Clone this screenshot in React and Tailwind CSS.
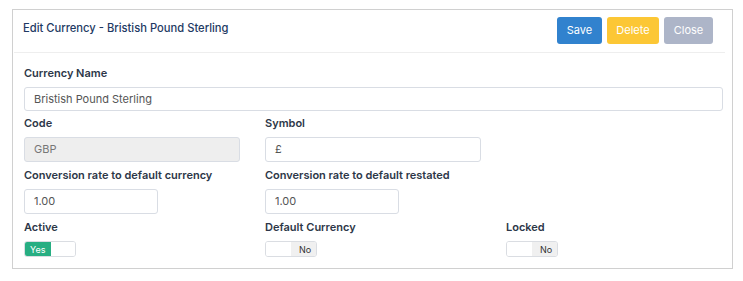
import React from "react";

const font = { fontFamily: "Inter, 'Noto Sans', sans-serif" };

function Label({ children }) {
  return (
    <div className="h-4 leading-4 text-[11px] font-semibold text-[#2d3748] mb-[6px] whitespace-nowrap">
      {children}
    </div>
  );
}

function Input({ value, width, disabled, h = "h-[25px]" }) {
  return (
    <div
      className={`${h} rounded-[3px] border border-[#d9dde4] flex items-center pl-[9px] text-[11px] ${
        disabled ? "bg-[#eeeeee] text-[#777]" : "bg-white text-[#555]"
      } ${width}`}
    >
      {value}
    </div>
  );
}

function Toggle({ on }) {
  return (
    <div className="w-[52px] h-[16px] rounded-[3px] border border-[#dadde2] flex overflow-hidden text-[9px] leading-none">
      {on ? (
        <>
          <div className="w-[26px] bg-[#27ae82] text-white flex items-center pl-[5px]">Yes</div>
          <div className="flex-1 bg-white" />
        </>
      ) : (
        <>
          <div className="w-[25px] bg-white" />
          <div className="flex-1 bg-[#f0f0f0] text-[#333] flex items-center pl-[8px]">No</div>
        </>
      )}
    </div>
  );
}

export default function App() {
  return (
    <div className="w-[743px] h-[281px] bg-white pt-[9px] pl-[12px]" style={font}>
      <div className="w-[721px] h-[260px] border border-[#d0d0d0] bg-white flex flex-col">
        <div className="flex justify-between items-start pl-[9px] pr-[18px] pt-[7px] pb-[8px] ml-[1px] mr-[7px] border-b border-[#eeeeee]">
          <div className="text-[11.2px] font-medium text-[#1e3a63] mt-[3px] leading-4">
            Edit Currency - Bristish Pound Sterling
          </div>
          <div className="flex gap-[5px] mr-[-6px]">
            <div className="w-[45px] h-[27px] rounded-[3px] bg-[#3182ce] text-white text-[11px] flex items-center justify-center">
              Save
            </div>
            <div className="w-[52px] h-[27px] rounded-[3px] bg-[#fcc735] text-white text-[11px] flex items-center justify-center">
              Delete
            </div>
            <div className="w-[49px] h-[27px] rounded-[3px] bg-[#adb5c8] text-white text-[11px] flex items-center justify-center">
              Close
            </div>
          </div>
        </div>
        <div className="pl-[11px] pr-[9px] pt-[12px] flex flex-col gap-[4px]">
          <div>
            <Label>Currency Name</Label>
            <Input value="Bristish Pound Sterling" width="w-full" h="h-[24px]" />
          </div>
          <div className="grid grid-cols-[216px_216px_1fr] gap-x-[25px] gap-y-[5px]">
            <div>
              <Label>Code</Label>
              <Input value="GBP" width="w-[216px]" disabled />
            </div>
            <div>
              <Label>Symbol</Label>
              <Input value="£" width="w-[216px]" />
            </div>
            <div />
            <div>
              <Label>Conversion rate to default currency</Label>
              <Input value="1.00" width="w-[134px]" />
            </div>
            <div>
              <Label>Conversion rate to default restated</Label>
              <Input value="1.00" width="w-[134px]" />
            </div>
            <div />
            <div>
              <Label>Active</Label>
              <Toggle on />
            </div>
            <div>
              <Label>Default Currency</Label>
              <Toggle />
            </div>
            <div>
              <Label>Locked</Label>
              <Toggle />
            </div>
          </div>
        </div>
      </div>
    </div>
  );
}
